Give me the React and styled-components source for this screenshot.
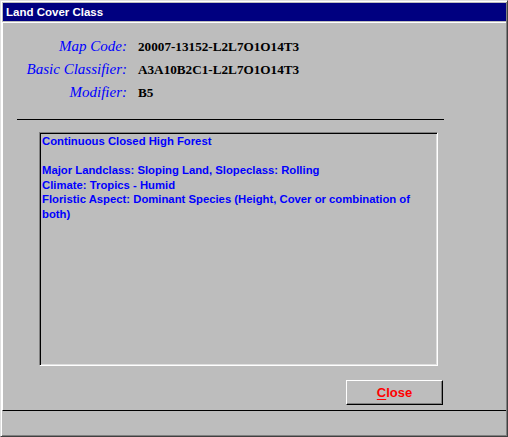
import { Fragment } from "react";
import styled, { createGlobalStyle } from "styled-components";

const Global = createGlobalStyle`
  html, body {
    margin: 0;
    padding: 0;
    background: #bdbdbd;
  }
`;

const Window = styled.div`
  width: 508px;
  height: 437px;
  box-sizing: border-box;
  background: #bdbdbd;
  border: 1px solid;
  border-color: #dfdfdf #404040 #404040 #dfdfdf;
  box-shadow: inset 1px 1px #ffffff, inset -1px -1px #808080;
  padding: 1px;
  display: flex;
  flex-direction: column;
`;

const TitleBar = styled.div`
  height: 18px;
  margin: 1px 0 1px 1px;
  background: #000080;
  color: #ffffff;
  font-family: "Liberation Sans", Arial, sans-serif;
  font-weight: bold;
  font-size: 11.5px;
  line-height: 18px;
  padding-left: 3px;
`;

const Panel = styled.div`
  height: 389px;
  box-sizing: border-box;
  border-top: 1px solid #ffffff;
  border-left: 1px solid #ffffff;
  border-bottom: 1px solid #000000;
  padding-top: 12px;
  display: flex;
  flex-direction: column;
`;

const Fields = styled.div`
  display: grid;
  grid-template-columns: 124px auto;
  grid-auto-rows: 23px;
  column-gap: 11px;
  align-items: baseline;
`;

const Label = styled.div`
  text-align: right;
  color: #0000ff;
  font-family: "Liberation Serif", "Times New Roman", serif;
  font-style: italic;
  font-size: 15px;
  line-height: 23px;
`;

const Value = styled.div`
  color: #000000;
  font-family: "Liberation Serif", "Times New Roman", serif;
  font-weight: bold;
  font-size: 13.2px;
  line-height: 23px;
`;

const Separator = styled.div`
  height: 1px;
  width: 427px;
  margin: 15px 0 0 14px;
  background: #000000;
`;

const TextBox = styled.div`
  width: 399px;
  height: 234px;
  box-sizing: border-box;
  margin: 12px 0 0 36px;
  border: 1px solid;
  border-color: #808080 #ffffff #ffffff #808080;
  box-shadow: inset 1px 1px #000000, inset -1px -1px #dfdfdf;
  padding: 1px 2px 0 2px;
  color: #0000ff;
  font-family: "Liberation Sans", Arial, sans-serif;
  font-weight: bold;
  font-size: 11.3px;
  line-height: 14.6px;
`;

const Line = styled.div`
  min-height: 14.6px;
`;

const Button = styled.button`
  width: 97px;
  height: 25px;
  margin: 14px 0 0 343px;
  box-sizing: border-box;
  background: #bdbdbd;
  border: 1px solid;
  border-color: #ffffff #000000 #000000 #ffffff;
  box-shadow: inset -1px -1px #808080;
  padding: 0;
  color: #ff0000;
  font-family: "Liberation Sans", Arial, sans-serif;
  font-weight: bold;
  font-size: 13px;
  line-height: 22px;
  cursor: pointer;

  u {
    text-underline-offset: 2px;
  }
`;

const Footer = styled.div`
  flex: 1;
`;

const fields = [
  ["Map Code:", "20007-13152-L2L7O1O14T3"],
  ["Basic Classifier:", "A3A10B2C1-L2L7O1O14T3"],
  ["Modifier:", "B5"],
];

const lines = [
  "Continuous Closed High Forest",
  "",
  "Major Landclass: Sloping Land, Slopeclass: Rolling",
  "Climate: Tropics - Humid",
  "Floristic Aspect: Dominant Species (Height, Cover or combination of both)",
];

export default function App() {
  return (
    <>
      <Global />
      <Window>
        <TitleBar>Land Cover Class</TitleBar>
        <Panel>
          <Fields>
            {fields.map(([label, value]) => (
              <Fragment key={label}>
                <Label>{label}</Label>
                <Value>{value}</Value>
              </Fragment>
            ))}
          </Fields>
          <Separator />
          <TextBox>
            {lines.map((l, i) => (
              <Line key={i}>{l}</Line>
            ))}
          </TextBox>
          <Button>
            <u>C</u>lose
          </Button>
        </Panel>
        <Footer />
      </Window>
    </>
  );
}
